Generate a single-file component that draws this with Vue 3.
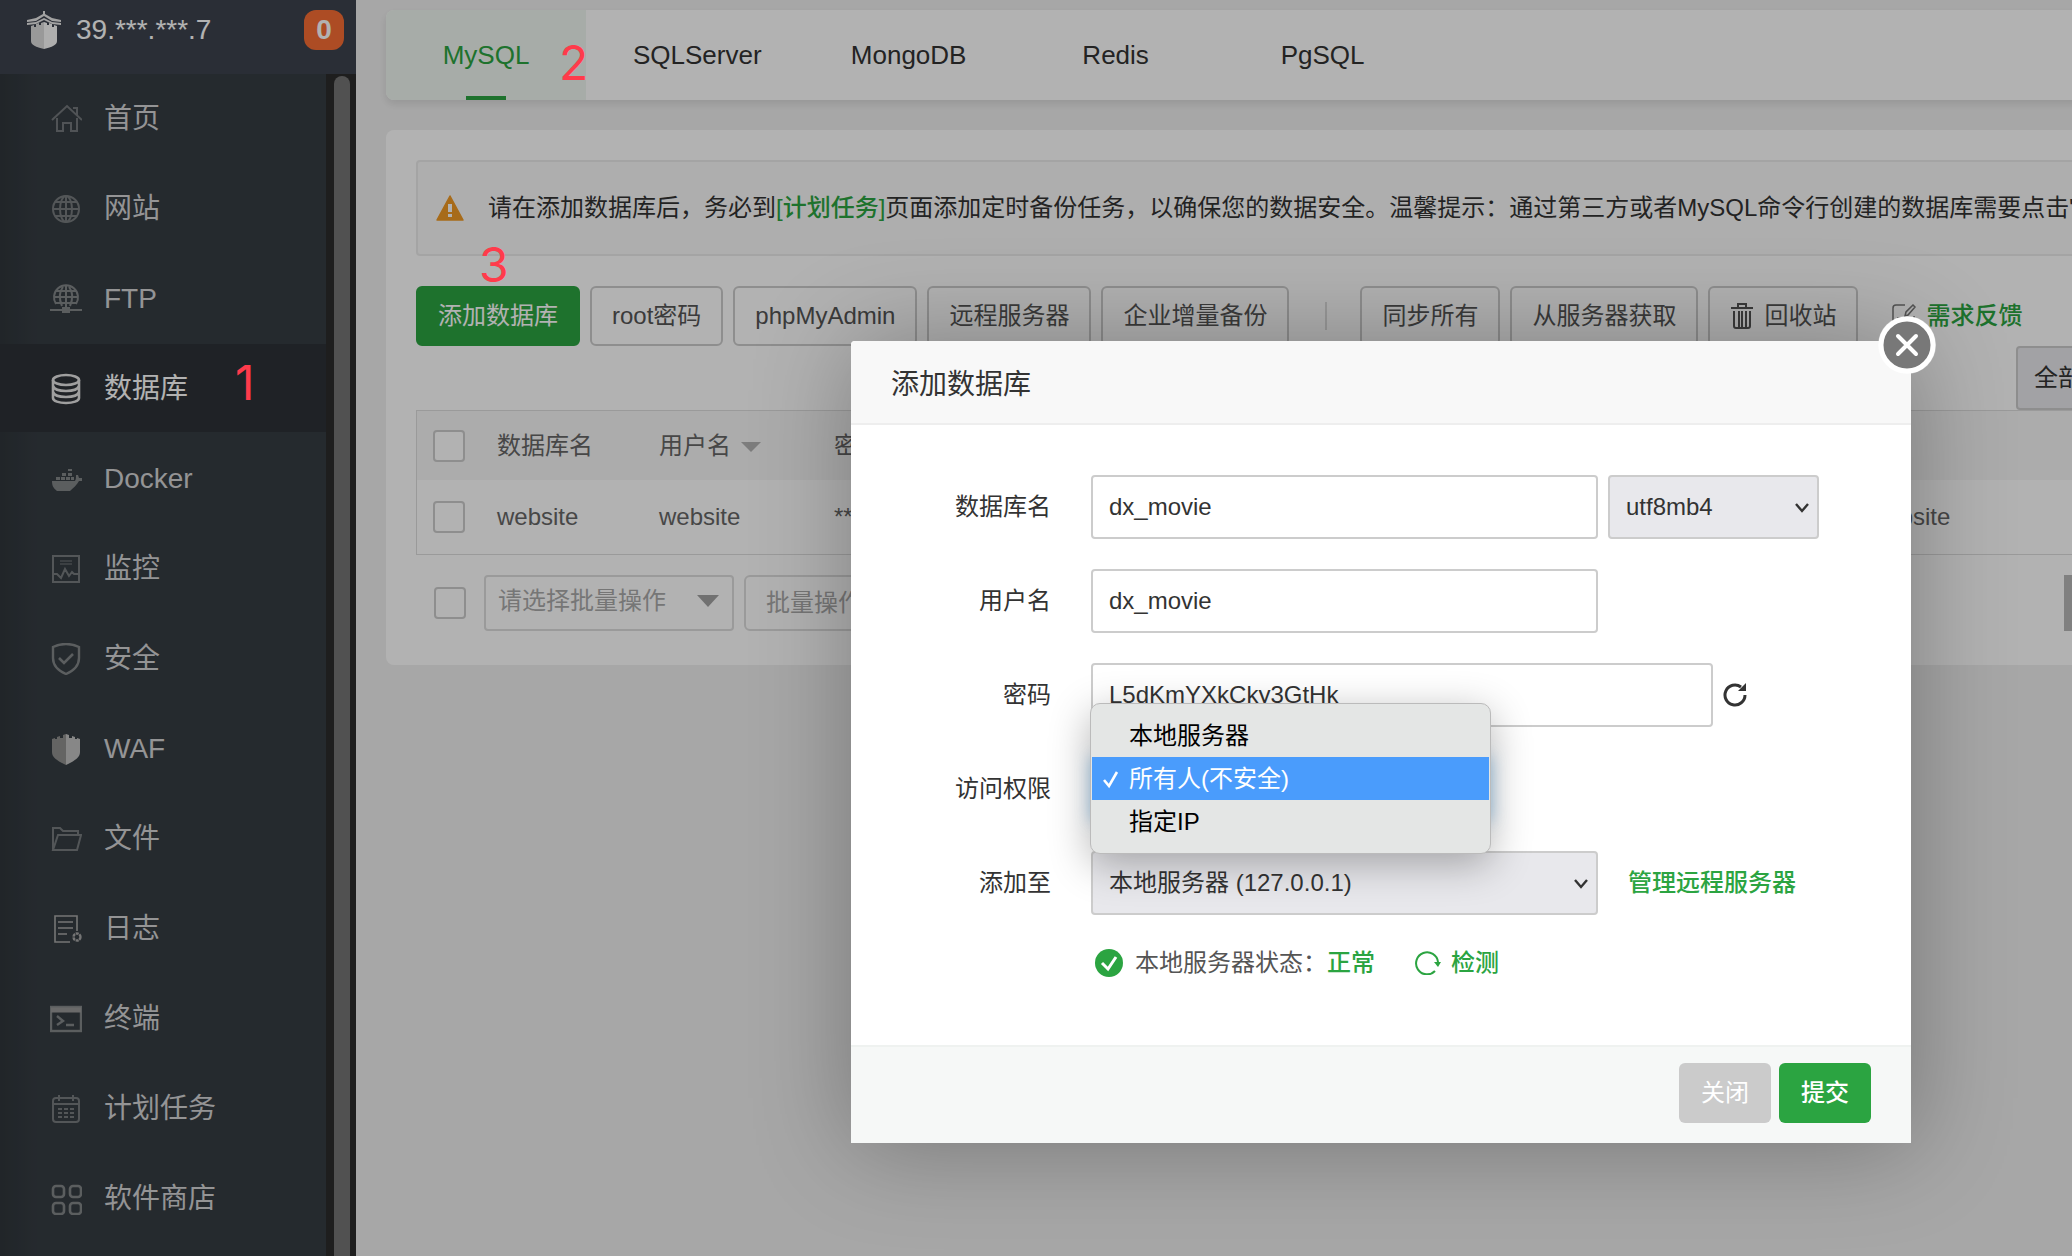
<script setup>
import { ref } from 'vue'

const menu = [
  { label: '首页', icon: 'home' },
  { label: '网站', icon: 'globe' },
  { label: 'FTP', icon: 'ftp' },
  { label: '数据库', icon: 'db', active: true },
  { label: 'Docker', icon: 'docker' },
  { label: '监控', icon: 'monitor' },
  { label: '安全', icon: 'shield' },
  { label: 'WAF', icon: 'waf' },
  { label: '文件', icon: 'folder' },
  { label: '日志', icon: 'log' },
  { label: '终端', icon: 'terminal' },
  { label: '计划任务', icon: 'calendar' },
  { label: '软件商店', icon: 'grid' },
]

const tabs = ['MySQL', 'SQLServer', 'MongoDB', 'Redis', 'PgSQL']
const tools = ['root密码', 'phpMyAdmin', '远程服务器', '企业增量备份']
const accessOptions = ['本地服务器', '所有人(不安全)', '指定IP']

const dbName = ref('dx_movie')
const userName = ref('dx_movie')
const password = ref('L5dKmYXkCky3GtHk')
const access = ref('所有人(不安全)')
</script>

<template>
  <div class="page">
    <aside class="sidebar">
      <header class="brand">
        <svg class="logo" viewBox="0 0 36 38" aria-hidden="true">
          <path d="M17 0h2v3l7 4 9 2v2l-9-1-8-5-8 5-9 1V9l9-2 7-4z" fill="#e8e8e8" />
          <path d="M1 12l9-1 8-4 8 4 9 1v2l-9-1-8-4-8 4-9 1z" fill="#e8e8e8" />
          <path d="M5 15l3-1v2h2v-3l3-1v2h2v-2l3-1v27C10 36 5 34 5 30z" fill="#dcdcdc" />
          <path d="M31 15l-3-1v2h-2v-3l-3-1v2h-2v-2l-3-1v27c8-2 13-4 13-8z" fill="#fafafa" />
        </svg>
        <span class="host">39.***.***.7</span>
        <span class="badge">0</span>
      </header>
      <div class="side-body">
        <nav class="menu">
          <a v-for="m in menu" :key="m.label" href="#" class="item" :class="{ active: m.active }">
            <svg class="micon" viewBox="0 0 32 32" fill="none" stroke="currentColor" stroke-width="2" aria-hidden="true">
              <g v-if="m.icon === 'home'" opacity=".8">
                <path d="M2 17L17 3l15 14M7 15v13h6v-8h8v8h6V15M23 5h4v7" />
              </g>
              <g v-else-if="m.icon === 'globe'" opacity=".85">
                <circle cx="16" cy="16" r="13" /><ellipse cx="16" cy="16" rx="6" ry="13" />
                <path d="M3 16h26M16 3v26M5 9h22M5 23h22" />
              </g>
              <g v-else-if="m.icon === 'ftp'">
                <path d="M6 21A12 12 0 1 1 26 21M12 23c-3-7-3-14 1-19M20 23c3-7 3-14-1-19M16 2v22M4 14h24M7 8h18M6 20h20" />
                <path d="M0 27h32" /><rect x="13" y="25" width="6" height="4" fill="currentColor" />
              </g>
              <g v-else-if="m.icon === 'db'" stroke-width="2.6">
                <ellipse cx="16" cy="7" rx="13" ry="5" />
                <path d="M3 7v18c0 3 6 5 13 5s13-2 13-5V7M3 13c1 3 6 5 13 5s12-2 13-5M3 19c1 3 6 5 13 5s12-2 13-5" />
              </g>
              <g v-else-if="m.icon === 'docker'" fill="currentColor" stroke="none">
                <path d="M2 18h23c1-2 1-3 1-6h2l1 3h3v3h-3c-2 4-6 7-9 10H7c-4-3-5-6-5-10zM6 14h4v3H6zM11 14h4v3h-4zM16 14h4v3h-4zM12 10h4v3h-4zM18 10h4v3h-4zM18 6h4v2h-4zM21 14h3v3h-3z" />
              </g>
              <g v-else-if="m.icon === 'monitor'" opacity=".85">
                <rect x="3" y="3" width="26" height="26" />
                <path d="M10 8h12M10 11h12" opacity=".5" /><path d="M3 21h4l4 4 4-9 4 7 3-4 2 2h5" />
              </g>
              <g v-else-if="m.icon === 'shield'" stroke-width="2.4">
                <path d="M16 1c5 0 9 1 13 3v11c0 8-6 13-13 16C9 28 3 23 3 15V4c4-2 8-3 13-3z" />
                <path d="M9 15l5 5 9-9" stroke-width="2.6" />
              </g>
              <g v-else-if="m.icon === 'waf'" stroke="none">
                <path d="M2 6l3-1v1h2V4l3-1v2h3V2l3-1v31C8 28 2 25 2 19z" fill="#90908f" />
                <path d="M30 6l-3-1v1h-2V4l-3-1v2h-3V2l-3-1v31c8-4 14-7 14-13z" fill="#c2c2c2" />
              </g>
              <g v-else-if="m.icon === 'folder'" opacity=".85">
                <path d="M3 27V5h7l3 3h15v4M3 27l5-15h23l-4 15z" />
              </g>
              <g v-else-if="m.icon === 'log'" stroke-width="1.6" stroke="#a8a8a8">
                <path d="M20 29H5V3h22v15M8 9h15M8 15h15M8 21h9" />
                <circle cx="27" cy="24" r="3.5" stroke-width="2.4" stroke-dasharray="3 .7" />
              </g>
              <g v-else-if="m.icon === 'terminal'" stroke-width="2.4">
                <rect x="1" y="4" width="30" height="24" /><path d="M1 7h30" stroke-width="5" stroke="#999" />
                <path d="M7 13l6 5-6 4M16 22h8" />
              </g>
              <g v-else-if="m.icon === 'calendar'" opacity=".85">
                <rect x="3" y="5" width="26" height="24" rx="3" />
                <path d="M3 11h26M9 2v6M23 2v6" /><path d="M8 16h17M8 20h17M8 24h17" stroke-dasharray="4 2" />
              </g>
              <g v-else stroke-width="2.6">
                <rect x="3" y="3" width="11" height="11" rx="3" /><rect x="20" y="3" width="11" height="11" rx="3" />
                <rect x="3" y="20" width="11" height="11" rx="3" /><rect x="20" y="20" width="11" height="11" rx="3" />
              </g>
            </svg>
            <span>{{ m.label }}</span>
          </a>
        </nav>
        <div class="track"><div class="thumb"></div></div>
      </div>
    </aside>

    <main class="main">
      <div class="content">
        <nav class="tabs">
          <a v-for="(t, i) in tabs" :key="t" href="#" class="tab" :class="{ on: i === 0 }">{{ t }}</a>
        </nav>

        <section class="card">
          <div class="alert">
            <svg class="warn" viewBox="0 0 28 26" aria-hidden="true">
              <path d="M14 1L27 25H1z" fill="#f09a26" stroke="#f09a26" stroke-width="1.5" stroke-linejoin="round" />
              <path d="M14 9v8M14 19v3" stroke="#fff" stroke-width="4" />
            </svg>
            <p>请在添加数据库后，务必到<a href="#">[计划任务]</a>页面添加定时备份任务，以确保您的数据安全。温馨提示：通过第三方或者MySQL命令行创建的数据库需要点击"</p>
          </div>

          <div class="toolbar">
            <button class="btn primary">添加数据库</button>
            <button v-for="t in tools" :key="t" class="btn">{{ t }}</button>
            <span class="sep"></span>
            <button class="btn">同步所有</button>
            <button class="btn">从服务器获取</button>
            <button class="btn">
              <svg width="24" height="28" viewBox="0 0 24 28" fill="none" stroke="currentColor" stroke-width="2" aria-hidden="true">
                <path d="M1 6h22M8 5V2h8v3M4 9v15q0 2 2 2h12q2 0 2-2V9M9 9v16M12 9v16M16 9v16" />
              </svg>
              回收站
            </button>
            <a href="#" class="feedback">
              <svg width="24" height="24" viewBox="0 0 24 24" fill="none" stroke="#777" stroke-width="2" aria-hidden="true">
                <path d="M13 1H4Q1 1 1 4v16q0 3 3 3h15q3 0 3-3v-8M5 14h5M13 12l1-4 7-7 2 2-7 8z" stroke-width="1.5" />
              </svg>
              需求反馈
            </a>
          </div>

          <div class="filter">
            <select aria-label="分类"><option>全部</option></select>
          </div>

          <table>
            <colgroup><col class="c0" /><col class="c1" /><col class="c2" /><col class="c3" /><col /></colgroup>
            <thead>
              <tr>
                <th><input type="checkbox" aria-label="全选" /></th>
                <th>数据库名</th>
                <th>用户名<svg class="tri" viewBox="0 0 20 10" aria-hidden="true"><path d="M0 0h20L10 10z" fill="#b4b4b4" /></svg></th>
                <th>密码</th>
                <th></th>
              </tr>
            </thead>
            <tbody>
              <tr>
                <td><input type="checkbox" aria-label="website" /></td>
                <td>website</td>
                <td>website</td>
                <td>**********</td>
                <td>website</td>
              </tr>
            </tbody>
          </table>

          <div class="batch">
            <input type="checkbox" aria-label="批量全选" />
            <div class="batch-select">
              <select aria-label="批量操作"><option>请选择批量操作</option></select>
              <svg viewBox="0 0 22 12" aria-hidden="true"><path d="M0 0h22L11 12z" fill="#a3a3a3" /></svg>
            </div>
            <button class="btn muted">批量操作</button>
            <span class="pager"></span>
          </div>
        </section>
      </div>
    </main>

    <div class="mask"></div>

    <div class="modal" role="dialog" aria-labelledby="dlg-title">
      <h2 id="dlg-title">添加数据库</h2>
      <button class="close" aria-label="关闭窗口">
        <svg viewBox="0 0 60 60" aria-hidden="true">
          <circle cx="30" cy="30" r="29" fill="#fff" opacity=".4" />
          <circle cx="30" cy="30" r="26" fill="#787878" stroke="#fff" stroke-width="5" />
          <path d="M21 21l18 18M39 21L21 39" stroke="#fff" stroke-width="4" stroke-linecap="round" />
        </svg>
      </button>

      <form class="form" @submit.prevent>
        <div class="row">
          <label for="f-db">数据库名</label>
          <input id="f-db" v-model="dbName" type="text" class="w-mid" />
          <div class="sel w-small">
            <select aria-label="字符集"><option>utf8mb4</option></select>
            <svg viewBox="0 0 16 10" aria-hidden="true"><path d="M2 1l6 7 6-7" /></svg>
          </div>
        </div>
        <div class="row">
          <label for="f-user">用户名</label>
          <input id="f-user" v-model="userName" type="text" class="w-mid" />
        </div>
        <div class="row">
          <label for="f-pwd">密码</label>
          <input id="f-pwd" v-model="password" type="text" class="w-wide" />
          <button type="button" class="refresh" aria-label="随机密码">
            <svg viewBox="0 0 24 24" aria-hidden="true">
              <path d="M22 12a10 10 0 1 1-4-8" fill="none" stroke="#333" stroke-width="3" />
              <path d="M23 0v8h-8z" fill="#333" />
            </svg>
          </button>
        </div>
        <div class="row">
          <label for="f-access">访问权限</label>
          <div class="access">
            <select id="f-access" v-model="access">
              <option v-for="o in accessOptions" :key="o">{{ o }}</option>
            </select>
            <ul class="options">
              <li v-for="o in accessOptions" :key="o" :class="{ picked: o === access }">
                <svg viewBox="0 0 18 20" aria-hidden="true"><path v-if="o === access" d="M2 11l5 6L15 3" /></svg>
                {{ o }}
              </li>
            </ul>
          </div>
        </div>
        <div class="row">
          <label for="f-server">添加至</label>
          <div class="sel w-mid">
            <select id="f-server"><option>本地服务器 (127.0.0.1)</option></select>
            <svg viewBox="0 0 16 10" aria-hidden="true"><path d="M2 1l6 7 6-7" /></svg>
          </div>
          <a href="#" class="manage">管理远程服务器</a>
        </div>
        <div class="status">
          <svg class="ok" viewBox="0 0 28 28" aria-hidden="true">
            <circle cx="14" cy="14" r="14" fill="#2ba441" />
            <path d="M7 14l6 6 8-12" fill="none" stroke="#fff" stroke-width="3" />
          </svg>
          <span>本地服务器状态：</span><b>正常</b>
          <a href="#">
            <svg viewBox="0 0 26 24" aria-hidden="true">
              <path d="M23 11A11 11 0 1 0 20 20" fill="none" stroke="#2ba441" stroke-width="2" />
              <path d="M19 11h7l-3 5z" fill="#2ba441" />
            </svg>
            检测
          </a>
        </div>
      </form>

      <footer>
        <button class="act">关闭</button>
        <button class="act submit">提交</button>
      </footer>
    </div>

    <span class="mark one">1</span>
    <span class="mark two">2</span>
    <span class="mark three">3</span>
  </div>
</template>

<style>
body {
  margin: 0;
  overflow: hidden;
}
</style>

<style scoped>
* {
  box-sizing: border-box;
}
.page {
  position: relative;
  display: flex;
  min-height: 100vh;
  overflow: hidden;
  background: #f0f0f0;
  color: #333;
  font: 24px/36px "Liberation Sans", "Noto Sans CJK SC", sans-serif;
}
a {
  color: #2ba441;
  text-decoration: none;
}
button,
input,
select {
  margin: 0;
  font: inherit;
  color: inherit;
}
select {
  appearance: none;
}
svg {
  display: block;
  flex: none;
}

/* sidebar */
.sidebar {
  display: flex;
  flex: none;
  flex-direction: column;
  width: 356px;
  background: #363d43;
}
.brand {
  display: flex;
  align-items: flex-start;
  height: 74px;
  padding: 10px 12px 0 26px;
  background: #3d424e;
  color: #fff;
  font-size: 28px;
  line-height: 40px;
}
.logo {
  width: 36px;
  height: 38px;
  margin: 1px 14px 0 0;
}
.host {
  flex: 1;
}
.badge {
  width: 40px;
  height: 40px;
  border-radius: 12px;
  background: #f86e34;
  font-weight: bold;
  text-align: center;
}
.side-body {
  display: flex;
  flex: 1;
}
.menu {
  flex: 1;
  background: linear-gradient(90deg, rgba(0, 0, 0, 0.12), transparent 40px);
}
.item {
  display: flex;
  align-items: center;
  gap: 22px;
  height: 90px;
  padding: 2px 0 0 50px;
  border-bottom: 2px solid transparent;
  background-clip: padding-box;
  color: #d4d4d6;
  font-size: 28px;
  line-height: 40px;
}
.micon {
  width: 32px;
  height: 32px;
  color: #838789;
}
.active {
  background-color: #2d3137;
  color: #fff;
}
.active .micon {
  color: #e4e4e4;
}
.track {
  width: 30px;
  padding: 2px 6px 0 8px;
  background: #2c2c2c;
}
.thumb {
  height: 100%;
  border-radius: 8px 8px 0 0;
  background: #757575;
}

/* main area */
.main {
  flex: 1;
  min-width: 0;
  overflow: hidden;
  padding: 10px 0 0 30px;
}
.content {
  min-width: 1820px;
}
.tabs {
  display: flex;
  gap: 7px;
  height: 90px;
  border-radius: 8px;
  background: #fff;
  box-shadow: 0 4px 8px rgba(0, 0, 0, 0.1);
}
.tab {
  position: relative;
  min-width: 200px;
  padding: 0 40px;
  color: #333;
  font-size: 26px;
  line-height: 90px;
  text-align: center;
}
.tab.on {
  border-radius: 8px 0 0 8px;
  background: #f0f7f1;
  color: #2ba441;
}
.tab.on::after {
  content: "";
  position: absolute;
  bottom: 0;
  left: 50%;
  width: 40px;
  height: 4px;
  margin-left: -20px;
  background: #2ba441;
}
.card {
  margin-top: 30px;
  padding: 30px 30px 34px;
  border-radius: 8px;
  background: #fff;
}
.alert {
  display: flex;
  align-items: center;
  gap: 24px;
  height: 96px;
  padding-left: 18px;
  border: 2px solid #ebebeb;
  border-radius: 4px;
  background: #fafafa;
  white-space: nowrap;
}
.alert p {
  margin: 0;
}
.alert a {
  font-weight: 500;
}
.warn {
  width: 28px;
  height: 26px;
}
.toolbar {
  display: flex;
  align-items: center;
  gap: 10px;
  margin-top: 30px;
  white-space: nowrap;
}
.btn {
  display: flex;
  align-items: center;
  gap: 10px;
  height: 60px;
  padding: 0 20px;
  border: 2px solid #ccc;
  border-radius: 6px;
  background: #fff;
  color: #555;
}
.btn.primary {
  border-color: #2ba441;
  background: #2ba441;
  color: #fff;
}
.sep {
  width: 2px;
  height: 28px;
  margin: 0 23px 0 26px;
  background: #ddd;
}
.feedback {
  display: flex;
  align-items: center;
  gap: 10px;
  margin-left: 24px;
  font-weight: 500;
}
.filter {
  display: flex;
  justify-content: flex-end;
}
.filter select {
  width: 160px;
  height: 64px;
  padding: 0 16px;
  border: 2px solid #ccc;
  border-radius: 4px;
  background: #e8e8ec;
}
table {
  width: 100%;
  border: 1px solid #ddd;
  border-collapse: separate;
  border-spacing: 0;
  table-layout: fixed;
  color: #666;
}
.c0 {
  width: 64px;
}
.c1 {
  width: 162px;
}
.c2 {
  width: 175px;
}
.c3 {
  width: 1035px;
}
th,
td {
  height: 74px;
  padding: 0 16px;
  font-weight: normal;
  text-align: left;
}
th {
  height: 69px;
  background: #f6f6f6;
}
input[type="checkbox"] {
  display: block;
  flex: none;
  width: 32px;
  height: 32px;
  appearance: none;
  border: 2px solid #ccc;
  border-radius: 4px;
  background: #fff;
}
.tri {
  display: inline-block;
  width: 20px;
  height: 10px;
  margin-left: 10px;
  vertical-align: middle;
}
.batch {
  display: flex;
  align-items: center;
  gap: 10px;
  margin-top: 20px;
  padding-left: 18px;
}
.batch-select {
  position: relative;
  margin-left: 8px;
}
.batch-select select {
  display: block;
  width: 250px;
  height: 56px;
  padding: 0 12px 4px;
  border: 2px solid #ddd;
  border-radius: 4px;
  background: #fff;
  color: #aaa;
}
.batch-select svg {
  position: absolute;
  top: 20px;
  right: 15px;
  width: 22px;
  height: 12px;
}
.muted {
  height: 56px;
  border-color: #ddd;
  color: #aaa;
}
.pager {
  width: 112px;
  height: 56px;
  margin-left: auto;
  background: #b8b8b8;
}

/* dialog */
.mask {
  position: absolute;
  inset: 0;
  background: rgba(0, 0, 0, 0.3);
}
.modal {
  position: absolute;
  top: 341px;
  left: 851px;
  width: 1060px;
  border-radius: 4px 4px 0 0;
  background: #fff;
  box-shadow: 2px 2px 100px rgba(0, 0, 0, 0.3);
}
h2 {
  margin: 0;
  padding: 24px 40px 18px;
  border-bottom: 2px solid #eee;
  border-radius: 4px 4px 0 0;
  background: #f8f8f8;
  font-size: 28px;
  font-weight: normal;
  line-height: 40px;
}
.close {
  position: absolute;
  top: -26px;
  right: -26px;
  width: 60px;
  height: 60px;
  padding: 0;
  border: 0;
  background: none;
}
.form {
  display: flex;
  flex-direction: column;
  gap: 30px;
  padding: 50px 0 64px;
}
.row {
  display: flex;
  align-items: center;
  height: 64px;
}
.row label {
  width: 200px;
  margin-right: 40px;
  text-align: right;
}
.row input,
.row select {
  display: block;
  height: 64px;
  padding: 0 16px;
  border: 2px solid #ccc;
  border-radius: 4px;
  background: #fff;
}
.row select {
  width: 100%;
  background: #e8e8ec;
}
.w-mid {
  width: 507px;
}
.w-small {
  width: 211px;
  margin-left: 10px;
}
.w-wide {
  width: 622px;
}
.sel {
  position: relative;
}
.sel svg {
  position: absolute;
  top: 28px;
  right: 9px;
  width: 16px;
  height: 10px;
  fill: none;
  stroke: #333;
  stroke-width: 2.4;
}
.refresh {
  width: 24px;
  height: 24px;
  margin-left: 10px;
  padding: 0;
  border: 0;
  background: none;
}
.manage {
  margin-left: 30px;
  font-weight: 500;
}
.access {
  position: relative;
  width: 400px;
}
.row .access select {
  border-color: #66afe9;
  box-shadow: 0 0 16px rgba(102, 175, 233, 0.6);
}
.options {
  position: absolute;
  z-index: 1;
  top: -54px;
  left: -1px;
  width: 401px;
  margin: 0;
  padding: 10px 1px;
  border: 1px solid #bbb;
  border-radius: 10px;
  background: #e4e6e5;
  box-shadow: 0 10px 40px rgba(0, 0, 0, 0.3);
  color: #000;
  list-style: none;
}
.options li {
  display: flex;
  align-items: center;
  gap: 9px;
  height: 43px;
  padding-left: 10px;
}
.options svg {
  width: 18px;
  height: 20px;
  fill: none;
  stroke: currentColor;
  stroke-width: 2.6;
}
.options .picked {
  background: #4a9cfc;
  color: #fff;
}
.status {
  display: flex;
  align-items: center;
  height: 36px;
  padding-left: 244px;
  color: #555;
}
.status .ok {
  width: 28px;
  height: 28px;
  margin-right: 12px;
}
.status b {
  color: #2ba441;
  font-weight: 500;
}
.status a {
  display: flex;
  align-items: center;
  gap: 10px;
  margin-left: 40px;
  font-weight: 500;
}
.status a svg {
  width: 26px;
  height: 24px;
}
footer {
  display: flex;
  justify-content: flex-end;
  gap: 8px;
  padding: 16px 40px 20px;
  border-top: 2px solid #eff2f0;
  background: #f6f8f7;
}
.act {
  width: 92px;
  height: 60px;
  padding: 0;
  border: 0;
  border-radius: 6px;
  background: #cbcbcb;
  color: #fff;
}
.submit {
  background: #2ba441;
  font-weight: 500;
}

/* numbered step marks drawn over the page */
.mark {
  position: absolute;
  color: #ff3b4b;
  font: 400 48px/48px Inter, sans-serif;
}
.one {
  top: 359px;
  left: 235px;
}
.two {
  top: 39px;
  left: 559px;
}
.three {
  top: 241px;
  left: 479px;
}
</style>
